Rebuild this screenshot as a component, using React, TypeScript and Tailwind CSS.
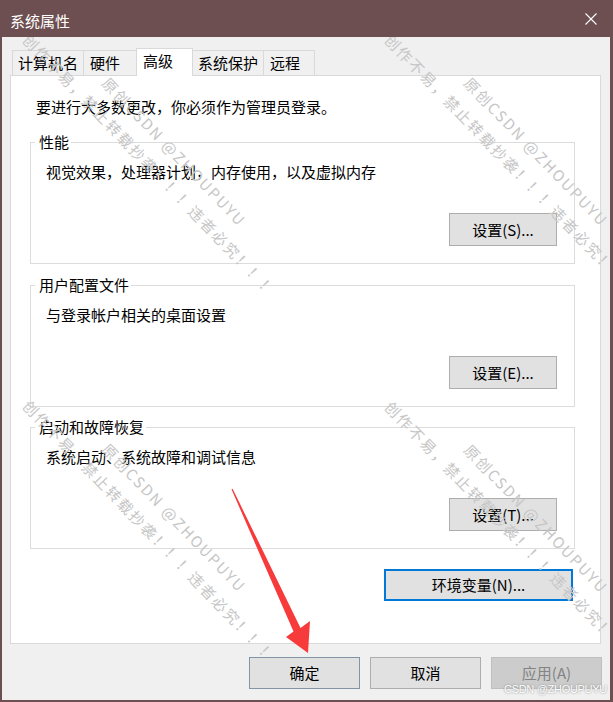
import React from "react";

function Btn({ label, className = "" }: { label: string; className?: string }) {
  return (
    <button
      className={`flex items-center justify-center border text-[15px] leading-[20px] ${className}`}
    >
      {label}
    </button>
  );
}

function Group({
  title,
  text,
  btn,
  className = "",
}: {
  title: string;
  text: string;
  btn: string;
  className?: string;
}) {
  return (
    <fieldset className={`ml-[19px] w-[545px] border border-[#dcdcdc] pb-[17px] ${className}`}>
      <legend className="ml-[4px] pl-[4px] pr-[2px] text-[15px] leading-[20px]">{title}</legend>
      <p className="ml-[15px] mt-[10px] text-[15px] leading-[20px]">{text}</p>
      <div className="mt-[31px] flex justify-end pr-[17px]">
        <Btn label={btn} className="h-[33px] w-[108px] border-[#adadad] bg-[#e1e1e1]" />
      </div>
    </fieldset>
  );
}

function Mark({ className }: { className: string }) {
  return (
    <div className={`absolute origin-top-left rotate-[46deg] ${className}`}>
      <div className="relative whitespace-nowrap text-[15px] leading-[20px] tracking-[2px] text-[#c6c6c6]">
        <span className="absolute left-[86px] top-[-27px]">原创CSDN @ZHOUPUYU</span>
        <span>创作不易，禁止转载抄袭！！！违者必究！！！</span>
      </div>
    </div>
  );
}

export default function App() {
  return (
    <div className="relative flex h-[702px] w-[613px] flex-col overflow-hidden border-b-2 border-l-2 border-r-[3px] border-[#6e4f51] bg-[#f0f0f0] font-['Noto_Sans_CJK_SC',sans-serif] text-black">
      {/* title bar */}
      <div className="flex h-[37px] shrink-0 items-start justify-between bg-[#6e4f51] pl-2 pr-[13px]">
        <span className="mt-[11px] text-[15px] leading-[20px] text-white">系统属性</span>
        <svg viewBox="0 0 12 12" className="mt-[13px] h-[12px] w-[12px]">
          <path d="M0.5 0.5L11.5 11.5M11.5 0.5L0.5 11.5" stroke="white" strokeWidth="1.1" fill="none" />
        </svg>
      </div>

      <div className="relative flex-1 pl-2 pr-[9px]">
        {/* tabs */}
        <div className="ml-[2px] mt-[11px] flex h-[27px] items-start text-[15px] leading-[20px]">
          <div className="mt-[2px] h-[25px] w-[72px] border border-b-0 border-[#d9d9d9] pl-[5px] pt-[2px]">计算机名</div>
          <div className="-ml-px mt-[2px] h-[25px] w-[54px] border border-b-0 border-[#d9d9d9] pl-[6px] pt-[2px]">硬件</div>
          <div className="relative z-10 -ml-px h-[28px] w-[57px] border border-b-0 border-[#d9d9d9] bg-white pl-[6px] pt-[2px]">高级</div>
          <div className="-ml-px mt-[2px] h-[25px] w-[72px] border border-b-0 border-[#d9d9d9] pl-[5px] pt-[2px]">系统保护</div>
          <div className="-ml-px mt-[2px] h-[25px] w-[52px] border border-b-0 border-[#d9d9d9] pl-[6px] pt-[2px]">远程</div>
        </div>

        {/* panel */}
        <div className="flex h-[569px] flex-col border border-[#d9d9d9] bg-white">
          <p className="ml-[25px] mt-[21px] text-[15px] leading-[20px]">要进行大多数更改，你必须作为管理员登录。</p>
          <Group className="mt-[15px]" title="性能" text="视觉效果，处理器计划，内存使用，以及虚拟内存" btn="设置(S)..." />
          <Group className="mt-[11px]" title="用户配置文件" text="与登录帐户相关的桌面设置" btn="设置(E)..." />
          <Group className="mt-[10px]" title="启动和故障恢复" text="系统启动、系统故障和调试信息" btn="设置(T)..." />
          <div className="ml-[373px] mt-[20px]">
            <Btn label="环境变量(N)..." className="h-[32px] w-[189px] border-2 border-[#0078d7] bg-[#e1e1e1]" />
          </div>
        </div>

        {/* dialog buttons */}
        <div className="mr-[-1px] mt-[13px] flex justify-end gap-[10px]">
          <Btn label="确定" className="h-[32px] w-[111px] border-[#8494a6] bg-[#e1e1e1]" />
          <Btn label="取消" className="h-[32px] w-[111px] border-[#adadad] bg-[#e1e1e1]" />
          <Btn label="应用(A)" className="h-[32px] w-[111px] border-[#bfbfbf] bg-[#cccccc] text-[#838383]" />
        </div>

        {/* watermark */}
        <div className="pointer-events-none absolute inset-0 overflow-hidden">
          <Mark className="left-[31px] top-[-7px]" />
          <Mark className="left-[393px] top-[-7px]" />
          <Mark className="left-[31px] top-[359px]" />
          <Mark className="left-[393px] top-[360px]" />
        </div>
      </div>

      {/* red arrow */}
      <svg viewBox="0 0 613 702" className="pointer-events-none absolute left-[-2px] top-0 h-[702px] w-[613px]">
        <polygon
          points="232.6,488.7 300.5,628 310,621 308,653 286,637 293.5,631.5 231.5,489.3"
          fill="#f73b3b"
        />
      </svg>

      <span className="pointer-events-none absolute left-[502px] top-[683px] font-['Liberation_Sans',sans-serif] text-[11px] leading-[12px] tracking-[-0.3px] text-white [text-shadow:0_0_2px_#777]">
        CSDN @ZHOUPUYU
      </span>
    </div>
  );
}
